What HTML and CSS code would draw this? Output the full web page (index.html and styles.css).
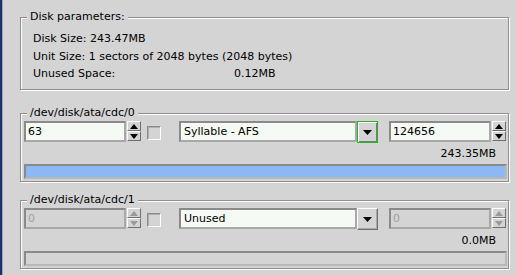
FILE: index.html
```html
<!DOCTYPE html>
<html>
<head>
<meta charset="utf-8">
<link rel="stylesheet" href="styles.css">
</head>
<body>
<div class="screen">
  <div class="edge"></div>
  <div class="main">
    <fieldset class="group params">
      <legend>Disk parameters:</legend>
      <div class="line">Disk Size: 243.47MB</div>
      <div class="line">Unit Size: 1 sectors of 2048 bytes (2048 bytes)</div>
      <div class="line row"><span class="label">Unused Space:</span><span>0.12MB</span></div>
    </fieldset>

    <fieldset class="group part first">
      <legend>/dev/disk/ata/cdc/0</legend>
      <div class="controls">
        <div class="spinner">
          <div class="field">63</div>
          <div class="spin">
            <div class="sbtn"><svg width="8" height="5" viewBox="0 0 8 5"><path d="M4 0L8 5H0Z"/></svg></div>
            <div class="sbtn"><svg width="8" height="5" viewBox="0 0 8 5"><path d="M0 0H8L4 5Z"/></svg></div>
          </div>
        </div>
        <div class="check"></div>
        <div class="combo">
          <div class="field">Syllable - AFS</div>
          <div class="drop focus"><svg width="9" height="5" viewBox="0 0 9 5"><path d="M0 0H9L4.5 5Z"/></svg></div>
        </div>
        <div class="spinner">
          <div class="field">124656</div>
          <div class="spin">
            <div class="sbtn"><svg width="8" height="5" viewBox="0 0 8 5"><path d="M4 0L8 5H0Z"/></svg></div>
            <div class="sbtn"><svg width="8" height="5" viewBox="0 0 8 5"><path d="M0 0H8L4 5Z"/></svg></div>
          </div>
        </div>
      </div>
      <div class="size">243.35MB</div>
      <div class="bar"><div class="fill" style="width:100%"></div></div>
    </fieldset>

    <fieldset class="group part second">
      <legend>/dev/disk/ata/cdc/1</legend>
      <div class="controls">
        <div class="spinner disabled">
          <div class="field">0</div>
          <div class="spin">
            <div class="sbtn"><svg width="8" height="5" viewBox="0 0 8 5"><path d="M4 0L8 5H0Z"/></svg></div>
            <div class="sbtn"><svg width="8" height="5" viewBox="0 0 8 5"><path d="M0 0H8L4 5Z"/></svg></div>
          </div>
        </div>
        <div class="check"></div>
        <div class="combo">
          <div class="field">Unused</div>
          <div class="drop"><svg width="9" height="5" viewBox="0 0 9 5"><path d="M0 0H9L4.5 5Z"/></svg></div>
        </div>
        <div class="spinner disabled">
          <div class="field">0</div>
          <div class="spin">
            <div class="sbtn"><svg width="8" height="5" viewBox="0 0 8 5"><path d="M4 0L8 5H0Z"/></svg></div>
            <div class="sbtn"><svg width="8" height="5" viewBox="0 0 8 5"><path d="M0 0H8L4 5Z"/></svg></div>
          </div>
        </div>
      </div>
      <div class="size">0.0MB</div>
      <div class="bar"></div>
    </fieldset>
  </div>
</div>
</body>
</html>
```

FILE: styles.css
```css
html, body {
  margin: 0;
  padding: 0;
  background: #d4d4d4;
}
body {
  font-family: "DejaVu Sans", sans-serif;
  font-size: 11px;
  color: #000;
}
.screen {
  display: flex;
  width: 516px;
  height: 275px;
  overflow: hidden;
}
.edge {
  width: 2px;
  background: #1e2f6e;
  border-right: 1px solid #9aa4c0;
  flex: none;
}
.main {
  flex: 1;
  padding: 0 7px 0 17px;
}
.group {
  margin: 0;
  border: 1px solid #8e8e8e;
  box-shadow: 1px 1px 0 #fff, inset 1px 1px 0 #fff;
  min-width: 0;
}
.group legend {
  line-height: 14px;
  padding: 0 3px;
  margin-left: -6px;
  background: #d4d4d4;
}
.params {
  margin-top: 10px;
  padding: 6px 12px 6px 12px;
}
.line {
  line-height: 18px;
  white-space: nowrap;
}
.row {
  display: flex;
  margin-top: -1px;
}
.label {
  width: 201px;
}
.part {
  padding: 1px 2px 2px 3px;
}
.part legend {
  margin-left: 3px;
}
.first { margin-top: 16px; }
.second { margin-top: 11px; }
.controls {
  display: flex;
  align-items: flex-start;
  height: 22px;
}
.field {
  box-sizing: border-box;
  height: 21px;
  border: 2px solid;
  border-color: #8a8a8a #a8a8a8 #a8a8a8 #8a8a8a;
  background: #f5faf5;
  line-height: 17px;
  padding-left: 2px;
  white-space: nowrap;
}
.spinner {
  display: flex;
  gap: 1px;
}
.spinner .field {
  width: 102px;
}
.spin {
  display: flex;
  flex-direction: column;
  width: 14px;
}
.sbtn {
  box-sizing: border-box;
  height: 10px;
  border: 1px solid;
  border-color: #fff #6e6e6e #6e6e6e #fff;
  background: #d4d4d4;
  display: flex;
  align-items: center;
  justify-content: center;
}
.sbtn svg { fill: #000; display: block; }
.disabled .field {
  background: #d4d4d4;
  color: #a0a0a0;
}
.disabled .sbtn svg { fill: #9a9a9a; }
.check {
  box-sizing: border-box;
  width: 14px;
  height: 14px;
  margin: 5px 0 0 6px;
  border: 1px solid;
  border-color: #8a8a8a #fff #fff #8a8a8a;
  box-shadow: inset 1px 1px 0 #b0b0b0;
  background: #d4d4d4;
}
.combo {
  display: flex;
  margin-left: 18px;
}
.combo .field {
  width: 178px;
  padding-left: 3px;
}
.drop {
  box-sizing: border-box;
  width: 21px;
  height: 22px;
  border: 1px solid;
  border-color: #fff #6e6e6e #6e6e6e #fff;
  box-shadow: inset -1px -1px 0 #a8a8a8;
  background: #d4d4d4;
  display: flex;
  align-items: center;
  justify-content: center;
}
.drop svg { fill: #000; display: block; margin-top: 1px; }
.drop.focus {
  border: 1px solid #22b822;
  box-shadow: inset 1px 1px 0 #fff, inset -1px -1px 0 #7a7a7a;
}
.combo + .spinner {
  margin-left: 11px;
}
.size {
  text-align: right;
  line-height: 14px;
  margin: 4px 10px 0 0;
}
.bar {
  box-sizing: border-box;
  height: 15px;
  margin-top: 3px;
  margin-right: -1px;
  border: 2px solid;
  border-color: #8a8a8a #b8b8b8 #b8b8b8 #8a8a8a;
  background: #d4d4d4;
}
.fill {
  height: 100%;
  background: #8cb9f3;
}
```
